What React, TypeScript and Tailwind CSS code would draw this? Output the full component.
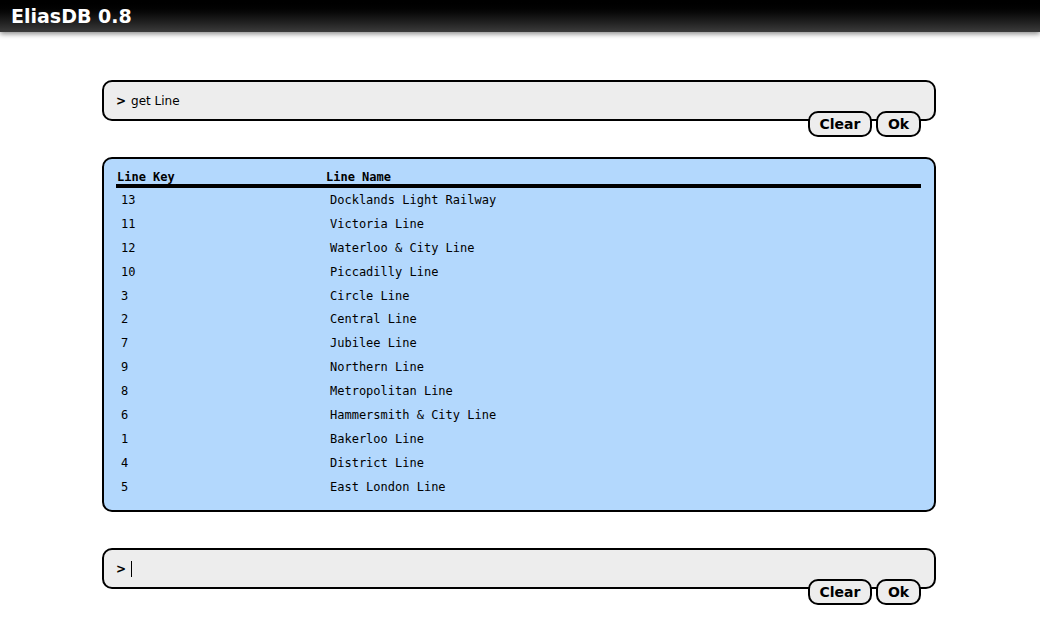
import React from "react";

const rows: [string, string][] = [
  ["13", "Docklands Light Railway"],
  ["11", "Victoria Line"],
  ["12", "Waterloo & City Line"],
  ["10", "Piccadilly Line"],
  ["3", "Circle Line"],
  ["2", "Central Line"],
  ["7", "Jubilee Line"],
  ["9", "Northern Line"],
  ["8", "Metropolitan Line"],
  ["6", "Hammersmith & City Line"],
  ["1", "Bakerloo Line"],
  ["4", "District Line"],
  ["5", "East London Line"],
];

function Buttons() {
  return (
    <div className="flex justify-end gap-[4px] pr-[15px] -mt-[10px] relative">
      <button className="h-[26px] w-[64px] rounded-[10px] border-2 border-black bg-[#ededed] text-[14px] font-bold leading-none text-black">
        Clear
      </button>
      <button className="h-[26px] w-[45px] rounded-[10px] border-2 border-black bg-[#ededed] text-[14px] font-bold leading-none text-black">
        Ok
      </button>
    </div>
  );
}

function Prompt({ text, cursor }: { text?: string; cursor?: boolean }) {
  return (
    <div>
      <div className="h-[41px] rounded-[10px] border-2 border-black bg-[#ededed] flex items-center pl-[12px] text-[12px] text-black">
        <span className="font-bold mr-[5px]">&gt;</span>
        {text && <span>{text}</span>}
        {cursor && <span className="inline-block w-px h-[16px] bg-black" />}
      </div>
      <Buttons />
    </div>
  );
}

export default function App() {
  return (
    <div className="w-[1040px] h-[639px] bg-white overflow-hidden" style={{ fontFamily: '"DejaVu Sans", Verdana, sans-serif' }}>
      <div className="h-[32px] bg-gradient-to-b from-black to-[#3c3c3c] shadow-[0_2px_5px_rgba(0,0,0,0.45)] flex items-center pl-[11px]">
        <h1 className="text-white font-bold text-[19px] leading-none">EliasDB 0.8</h1>
      </div>

      <div className="ml-[102px] w-[834px] pt-[48px]">
        <Prompt text="get Line" />

        <div className="mt-[20px] h-[355px] rounded-[10px] border-2 border-black bg-[#b3d8fd] px-[12px] pt-[11px] text-[12px] text-black" style={{ fontFamily: '"DejaVu Sans Mono", monospace' }}>
          <div className="mr-[1px] flex font-bold border-b-[4px] border-black leading-[14px] pl-[1px]">
            <div className="w-[209px]">Line Key</div>
            <div>Line Name</div>
          </div>
          {rows.map(([k, n]) => (
            <div key={k} className="flex h-[23.9px] items-center pl-[5px]">
              <div className="w-[209px]">{k}</div>
              <div>{n}</div>
            </div>
          ))}
        </div>

        <div className="mt-[36px]">
          <Prompt cursor />
        </div>
      </div>
    </div>
  );
}
